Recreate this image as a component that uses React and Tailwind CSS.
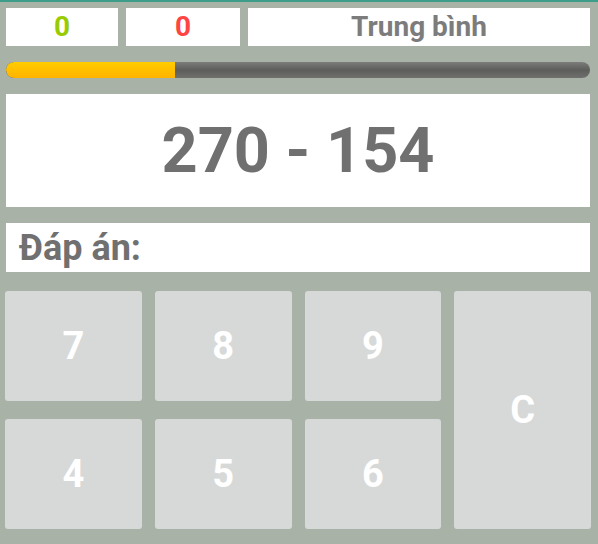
import React from "react"

const keys = ["7", "8", "9", "4", "5", "6"]

export default function App() {
  return (
    <div
      className="w-[598px] h-[544px] bg-[#a8b2a6] border-t-2 border-[#3e9d89] flex flex-col pl-[6px] pr-[8px] pt-[6px] overflow-hidden"
      style={{ fontFamily: "Roboto, 'Liberation Sans', sans-serif" }}
    >
      {/* score row */}
      <div className="flex gap-[8px] h-[38px]">
        <div className="w-[112px] bg-white flex items-center justify-center text-[28px] font-bold text-[#99cc00]">0</div>
        <div className="w-[114px] bg-white flex items-center justify-center text-[28px] font-bold text-[#ff4444]">0</div>
        <div className="flex-1 bg-white flex items-center justify-center text-[28px] font-bold text-[#7c7c7c]">Trung bình</div>
      </div>

      {/* progress */}
      <div className="mt-[16px] h-[16px] rounded-full overflow-hidden flex bg-gradient-to-b from-[#7c7d7b] via-[#5d5e5c] to-[#6f706e]">
        <div className="w-[169px] h-full rounded-l-full bg-gradient-to-b from-[#ffcc00] to-[#ffb300]" />
      </div>

      {/* problem */}
      <div className="mt-[16px] h-[113px] bg-white flex items-center justify-center text-[63px] font-bold text-[#707070] leading-none">
        270 - 154
      </div>

      {/* answer */}
      <div className="mt-[16px] h-[49px] bg-white flex items-center pl-[13px] text-[36px] font-bold text-[#707070]">
        Đáp án:
      </div>

      {/* keypad */}
      <div className="mt-[19px] ml-[-1px] mr-[-1px] grid grid-cols-4 grid-rows-[110px_110px] gap-x-[13px] gap-y-[18px]">
        {keys.slice(0, 3).map((k) => (
          <button key={k} className="bg-[#d7d9d8] rounded-[3px] text-white text-[38px] font-bold flex items-center justify-center">
            {k}
          </button>
        ))}
        <button className="row-span-2 bg-[#d7d9d8] rounded-[3px] text-white text-[38px] font-bold flex items-center justify-center">
          C
        </button>
        {keys.slice(3).map((k) => (
          <button key={k} className="bg-[#d7d9d8] rounded-[3px] text-white text-[38px] font-bold flex items-center justify-center">
            {k}
          </button>
        ))}
      </div>
    </div>
  )
}
